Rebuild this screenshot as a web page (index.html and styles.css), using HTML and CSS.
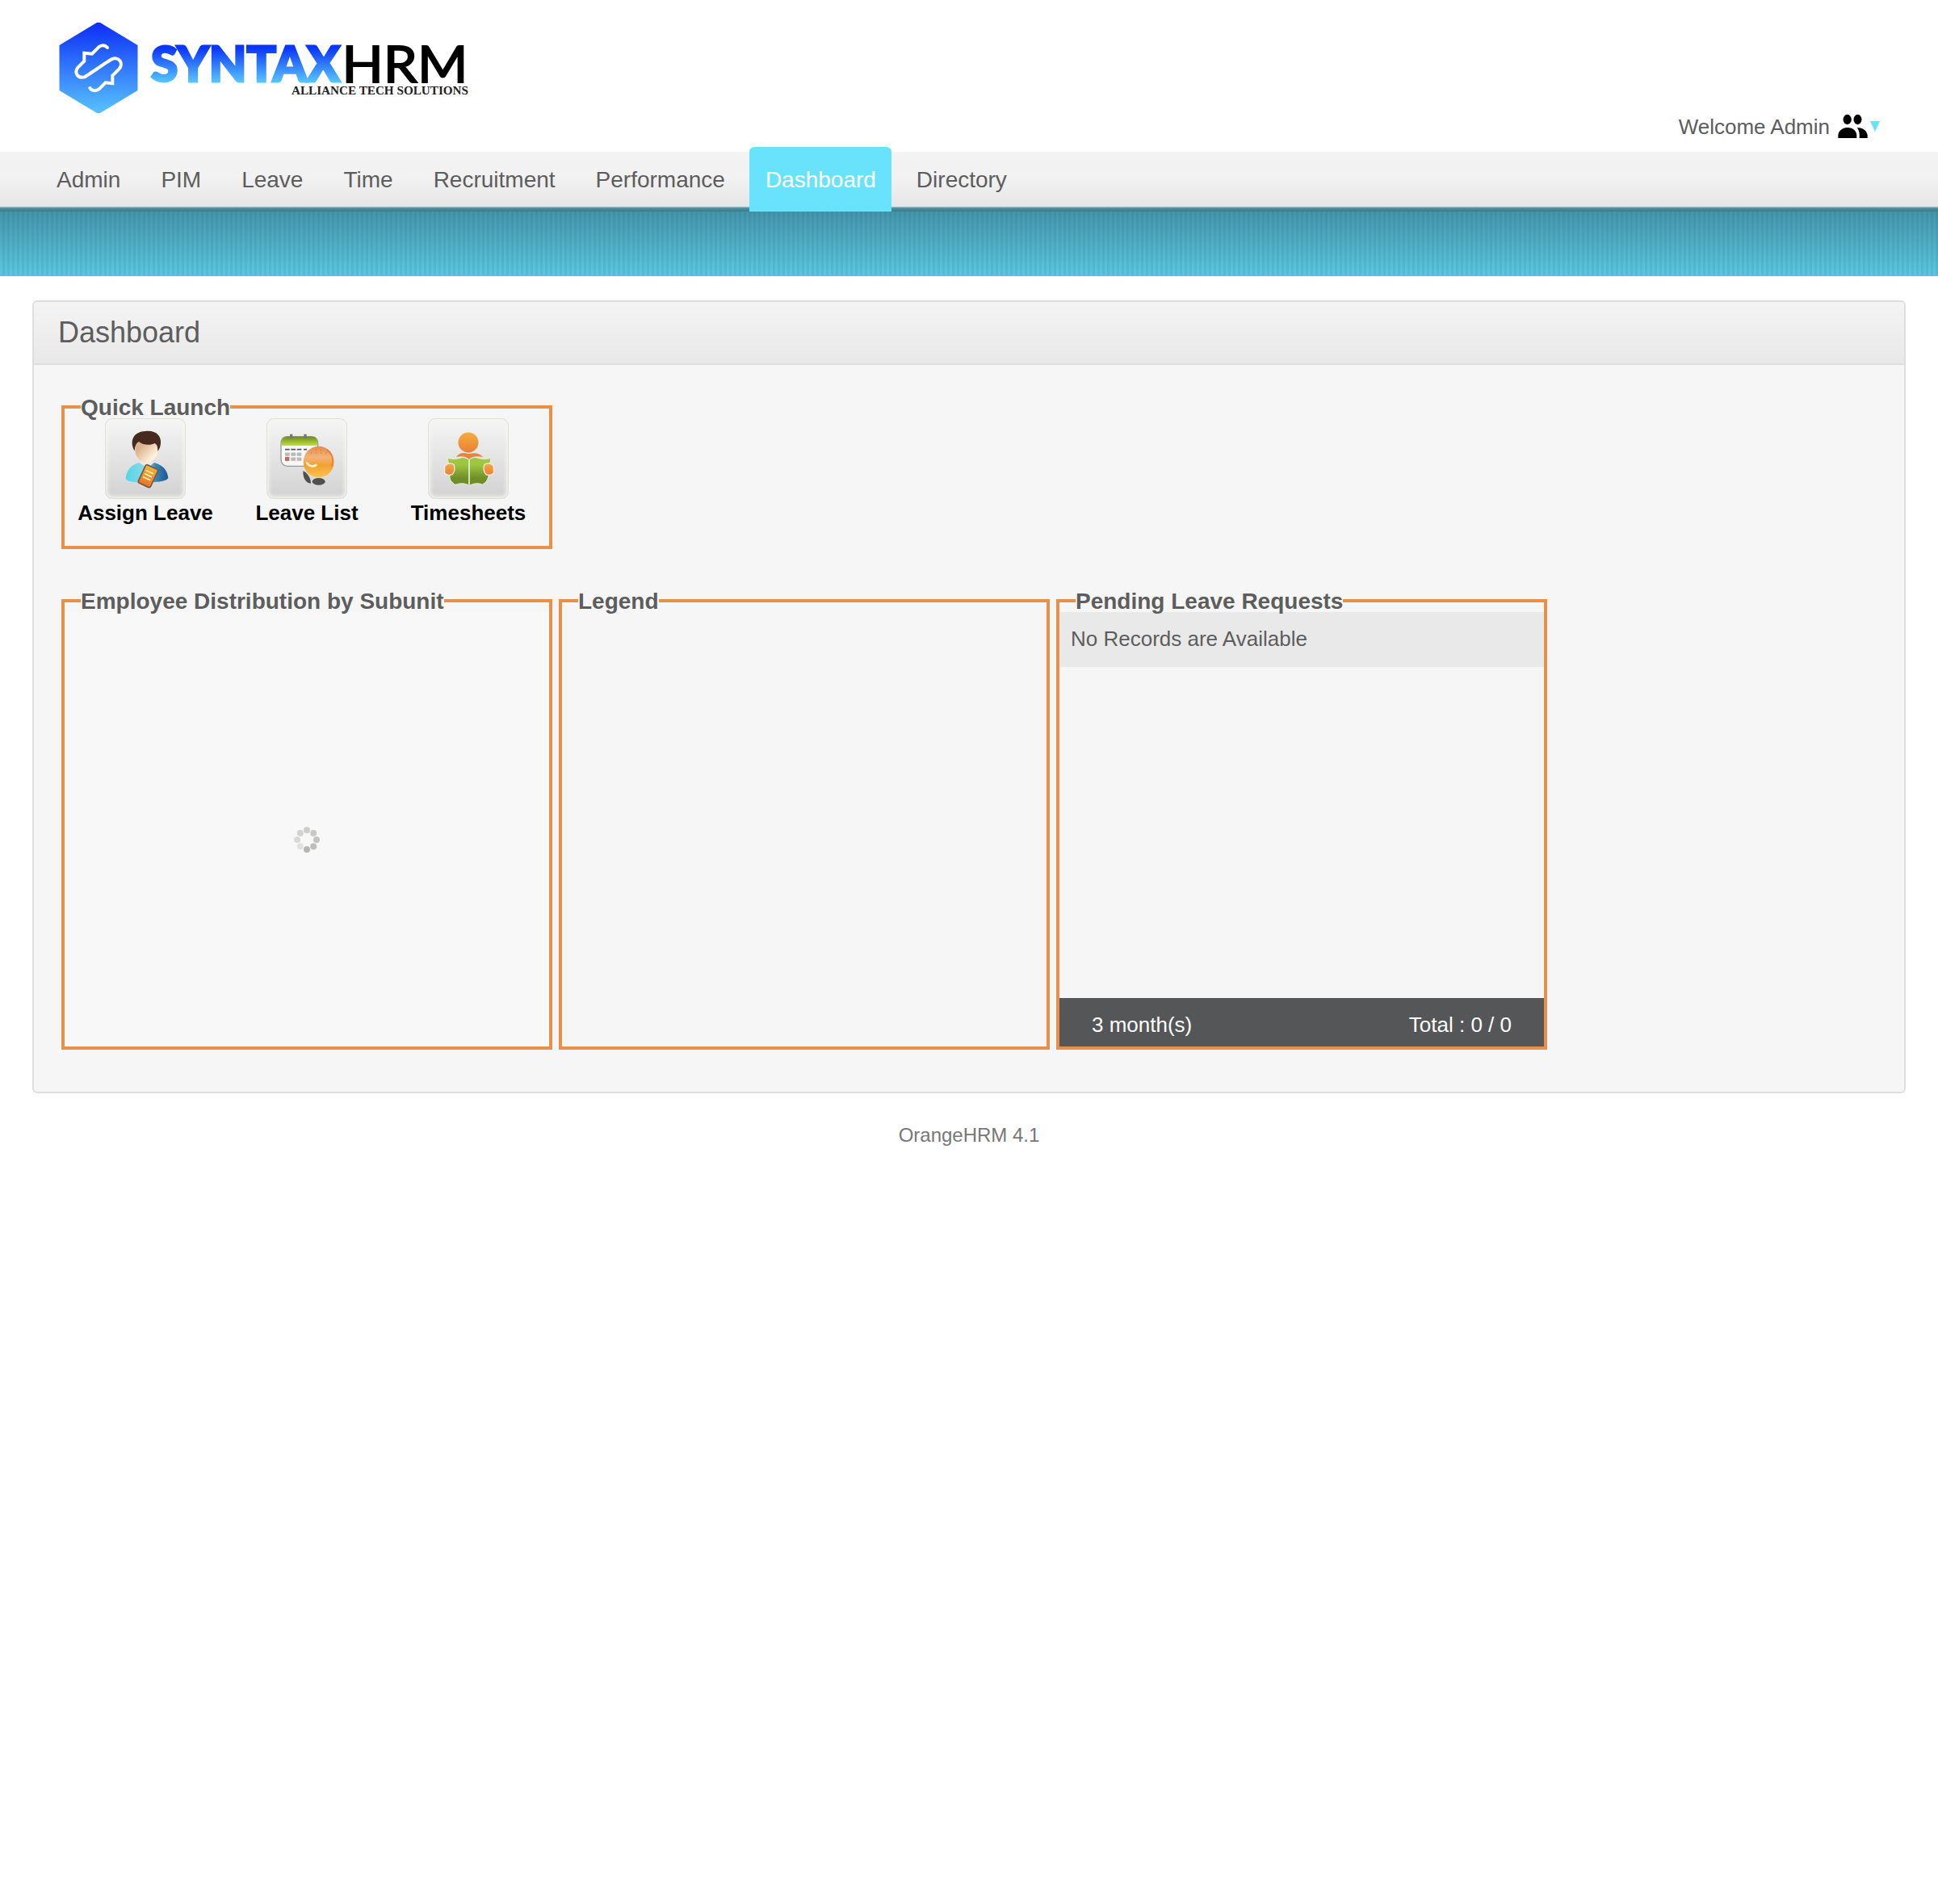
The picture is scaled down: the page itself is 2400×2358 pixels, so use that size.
FILE: index.html
```html
<!DOCTYPE html>
<html lang="en">
<head>
<meta charset="utf-8">
<title>Dashboard</title>
<link rel="stylesheet" href="styles.css">
</head>
<body>
<header class="header">
  <svg class="logo" viewBox="60 15 540 140" role="img" aria-label="Syntax HRM">
    <defs>
      <linearGradient id="hex" x1="0" y1="28" x2="0" y2="140" gradientUnits="userSpaceOnUse"><stop offset="0" stop-color="#0b2df6"/><stop offset="1" stop-color="#58c3ff"/></linearGradient>
      <linearGradient id="word" x1="0" y1="55" x2="0" y2="102" gradientUnits="userSpaceOnUse"><stop offset=".1" stop-color="#0b36f8"/><stop offset="1" stop-color="#58c6ff"/></linearGradient>
    </defs>
    <path fill="url(#hex)" d="M120 28h4l46.500 28v56L124 140h-4l-46.500-28V56z"/>
    <path transform="translate(60 15) scale(.33333)" fill="none" stroke="#fff" stroke-width="12" stroke-linecap="round" d="M219 132C210 122 199 122 189 128L162 155L133 152V182L110 205C93 226 110 247 134 241C144 237 220 182 235 175C262 163 281 191 262 212L238 236V265L212 262L188 286C175 295 160 292 154 282"/>
    <text class="logo-syntax" x="187" y="100.500" textLength="234" lengthAdjust="spacingAndGlyphs">SYNTAX</text>
    <text class="logo-hrm" x="423.500" y="101.500" textLength="156" lengthAdjust="spacingAndGlyphs">HRM</text>
    <text class="logo-tag" x="361" y="116.500" textLength="219" lengthAdjust="spacingAndGlyphs">ALLIANCE TECH SOLUTIONS</text>
  </svg>
  <div class="welcome">
    <span>Welcome Admin</span>
    <svg class="people" viewBox="648 63 156 93">
      <ellipse cx="683" cy="84" rx="15.500" ry="18.500"/><ellipse cx="721.500" cy="84" rx="15" ry="18.500"/>
      <path d="M649 153V141C652 121 672 114 683 114C698 114 716 121 718 141V153ZM719 115C744 112 757 130 758 142V153H728V139C728 129 724 120 719 115Z"/>
      <path class="caret" d="M768 90H804L786 130Z"/>
    </svg>
  </div>
</header>
<nav class="menu">
  <a>Admin</a><a>PIM</a><a>Leave</a><a>Time</a><a>Recruitment</a><a>Performance</a><a class="current">Dashboard</a><a>Directory</a>
</nav>
<div class="band"></div>
<main class="box">
  <h1 class="box-head">Dashboard</h1>
  <div class="box-body">
    <fieldset class="panel launch">
      <legend>Quick Launch</legend>
      <div class="launch-items">
        <a class="launch-item">
          <span class="tile"><svg viewBox="180 114 300 300">
            <defs>
              <linearGradient id="shirt"><stop offset="0" stop-color="#54d5e8"/><stop offset=".5" stop-color="#8ed9ea"/><stop offset=".7" stop-color="#3b86b8"/><stop offset="1" stop-color="#1c5590"/></linearGradient>
              <linearGradient id="face" x1="0" y1="0" x2="1" y2="1"><stop offset=".3" stop-color="#dbb28a"/><stop offset=".8" stop-color="#fff1df"/></linearGradient>
              <linearGradient id="card" x1="0" y1="0" x2="0" y2="1"><stop offset="0" stop-color="#f7b233"/><stop offset="1" stop-color="#ee7420"/></linearGradient>
            </defs>
            <path fill="url(#shirt)" d="M257 338C260 304 281 284 310 279H360C390 284 412 304 415 336C408 346 390 351 340 352C300 353 264 352 257 338Z"/>
            <path fill="#f3e7d8" d="M308 279L318 262H350L362 279L338 300Z"/>
            <ellipse fill="url(#face)" cx="334" cy="232" rx="42" ry="45"/>
            <path fill="#47291d" d="M290 235C272 205 280 164 330 162C370 158 390 180 387 207C386 222 380 232 376 236C376 218 373 211 364 207C352 215 323 215 306 201C299 205 291 214 290 235Z"/>
            <g transform="rotate(25 340 329)"><rect x="315" y="292" width="50" height="74" rx="7" fill="url(#card)" stroke="#6b5c50" stroke-width="5"/><path stroke="#fff3cc" stroke-width="5" d="M324 313h30M324 326h30M324 339h30"/></g>
          </svg></span>
          <span>Assign Leave</span>
        </a>
        <a class="launch-item">
          <span class="tile"><svg viewBox="780 114 300 300">
            <defs>
              <linearGradient id="cal" x1="0" y1="0" x2="0" y2="1"><stop offset="0" stop-color="#698d1c"/><stop offset="1" stop-color="#c3df3f"/></linearGradient>
              <linearGradient id="ball" x1="0" y1="0" x2="0" y2="1"><stop offset="0" stop-color="#e68a45"/><stop offset=".35" stop-color="#f3b47c"/><stop offset=".6" stop-color="#f2a132"/><stop offset="1" stop-color="#fbc34e"/></linearGradient>
            </defs>
            <path fill="#f8f8f8" stroke="#999" stroke-width="4" d="M834 210C834 190 842 182 856 182H948C963 182 971 192 971 210V292H858C842 290 834 280 834 266Z"/>
            <path fill="url(#cal)" d="M836 216V208C836 188 846 182 858 182H948C963 182 970 192 970 210V216Z"/>
            <path stroke="#777" stroke-width="10" d="M872 173v17M924 173v17"/>
            <path stroke="#555" stroke-width="5" d="M849 230h17M871 230h17M893 230h17M918 230h12"/>
            <path stroke="#b9b9b9" stroke-width="13" d="M849 248h17M871 248h17M893 248h17M871 266h17M893 266h17"/>
            <path stroke="#c4685a" stroke-width="15" d="M849 265h16"/>
            <path fill="#50504f" d="M916 310C930 315 945 335 945 356C929 357 915 340 916 310Z"/>
            <ellipse fill="#50504f" cx="974" cy="349" rx="24" ry="13"/>
            <ellipse fill="url(#ball)" cx="974" cy="276" rx="57" ry="58"/>
            <path fill="none" stroke="#df7931" stroke-width="6" opacity=".7" d="M1003 230Q1035 253 1023 294"/>
            <path fill="none" stroke="#fff1c9" stroke-width="8" stroke-linecap="round" d="M930 280Q944 299 964 288"/>
            <path stroke="#d66d36" stroke-width="4" stroke-dasharray="4 14" opacity=".7" d="M945 243h62M962 232h30"/>
          </svg></span>
          <span>Leave List</span>
        </a>
        <a class="launch-item">
          <span class="tile"><svg viewBox="420 114 300 300">
            <defs>
              <linearGradient id="reader" x1="0" y1="0" x2="0" y2="1"><stop offset="0" stop-color="#f4ad3b"/><stop offset="1" stop-color="#e97f38"/></linearGradient>
              <linearGradient id="book" x1="0" y1="0" x2="0" y2="1"><stop offset=".25" stop-color="#9fc640"/><stop offset=".75" stop-color="#6f8d28"/></linearGradient>
            </defs>
            <circle fill="url(#reader)" cx="570" cy="204" r="37.500"/>
            <path fill="#e98140" d="M525 258C535 244 550 239 571 247C593 239 612 245 625 258C600 253 584 256 573 266C560 255 545 253 525 258Z"/>
            <path fill="url(#book)" stroke="#e8f1d5" stroke-width="3" d="M493 262C512 267 530 266 545 260C556 258 567 264 572 269C580 262 590 258 600 260C617 266 636 267 654 262L650 282L645 330C639 348 633 354 622 360C604 353 588 357 574 364C558 355 540 354 522 361C509 354 500 342 501 330L496 282Z"/>
            <path stroke="#e8f1d5" stroke-width="5" d="M573 269v93"/>
            <path fill="url(#reader)" stroke="#eee" stroke-width="4" d="M482 292C490 280 508 279 516 286C522 298 519 315 510 323C500 327 487 325 482 318ZM664 292C656 280 638 279 630 286C624 298 627 315 636 323C646 327 659 325 664 318Z"/>
          </svg></span>
          <span>Timesheets</span>
        </a>
      </div>
    </fieldset>
    <div class="panels">
      <fieldset class="panel">
        <legend>Employee Distribution by Subunit</legend>
        <div class="loading">
          <svg class="spinner" viewBox="-16 -16 32 32">
            <circle cy="-12" r="4" fill="#cdcdc9"/><circle cx="8.200" cy="-8.200" r="4" fill="#c8c8c4"/><circle cx="12" r="4" fill="#c4c4c0"/><circle cx="8.200" cy="8.200" r="4" fill="#bebeba"/><circle cy="12" r="4" fill="#b5b5b1"/><circle cx="-8.200" cy="8.200" r="4" fill="#e2e2de"/><circle cx="-12" r="4" fill="#d8d8d5"/><circle cx="-8.200" cy="-8.200" r="4" fill="#d3d3cf"/>
          </svg>
        </div>
      </fieldset>
      <fieldset class="panel">
        <legend>Legend</legend>
      </fieldset>
      <fieldset class="panel">
        <legend>Pending Leave Requests</legend>
        <div class="requests">
          <div class="record">No Records are Available</div>
          <div class="totals"><span>3 month(s)</span><span>Total : 0 / 0</span></div>
        </div>
      </fieldset>
    </div>
  </div>
</main>
<footer class="footer">OrangeHRM 4.1</footer>
</body>
</html>
```
FILE: styles.css
```css
* { box-sizing: border-box; }
body {
  margin: 0;
  background: #fff;
  color: #5d5d5d;
  font: 26px/30px "Liberation Sans", Arial, sans-serif;
}
.header {
  height: 188px;
  padding: 15px 72px 0 60px;
  display: flex;
  justify-content: space-between;
  align-items: flex-start;
}
.logo { width: 540px; height: 140px; display: block; }
.logo-syntax { font: 900 61px Lato, sans-serif; fill: url(#word); stroke: url(#word); stroke-width: 3px; }
.logo-hrm { font: 400 62px Lato, sans-serif; fill: #000; stroke: #000; stroke-width: 1.8px; }
.logo-tag { font: 700 15px "Liberation Serif", serif; fill: #222; }
.welcome { display: flex; gap: 10px; margin-top: 126px; align-items: flex-start; }
.welcome span { line-height: 32px; }
.people { width: 52px; height: 31px; }
.caret { fill: #68e3fb; }
.menu {
  height: 74px;
  padding-left: 50px;
  display: flex;
  gap: 10px;
  background: linear-gradient(#f3f3f3, #f2f2f2 45%, #e6e6e6) 0 0 / 100% 68px no-repeat,
    linear-gradient(#a9c2c7, #4a8e9c 2px, #377c8b) 0 68px / 100% 6px no-repeat;
}
.menu a { padding: 0 20px; font-size: 28px; line-height: 70px; white-space: nowrap; }
.menu .current {
  height: 80px;
  margin: -6px 1px 0 0;
  padding-right: 19px;
  line-height: 82px;
  background: #68e3fb;
  border-radius: 6px 6px 0 0;
  color: #fff;
}
.band {
  height: 80px;
  background: repeating-linear-gradient(90deg, rgba(0, 0, 0, 0) 0 3px, rgba(0, 50, 70, .07) 3px 6px),
    linear-gradient(#4495aa, #5bc8df);
}
.box {
  margin: 30px 40px 0;
  border: 2px solid #dedede;
  border-radius: 6px;
  background: #f6f6f6;
  overflow: hidden;
}
.box-head {
  margin: 0;
  height: 78px;
  padding-left: 30px;
  border-bottom: 2px solid #dedede;
  background: linear-gradient(#f4f4f4, #e8e8e8);
  font-size: 36px;
  font-weight: 400;
  line-height: 75px;
}
.box-body { padding: 38px 34px 52px; display: flex; flex-direction: column; gap: 50px; }
.panel {
  width: 608px;
  height: 570px;
  min-width: 0;
  margin: 0;
  padding: 0;
  border: 4px solid #e8914b;
}
.panel legend {
  position: relative;
  height: 28px;
  margin-left: 20px;
  padding: 0;
  font-size: 28px;
  font-weight: 700;
  line-height: 30px;
}
.launch { height: 190px; }
.launch-items { display: grid; grid-template-columns: repeat(3, 200px); }
.launch-item {
  display: flex;
  flex-direction: column;
  align-items: center;
  gap: 2px;
  color: #000;
  font-weight: 700;
}
.tile {
  width: 100px;
  height: 100px;
  border: 1px solid #dededb;
  border-radius: 9px;
  background: linear-gradient(#f5f5f5, #d2d2d2);
  box-shadow: inset 0 0 4px 2px #f5f5f1;
}
.tile svg { display: block; width: 100px; height: 100px; margin: -1px; }
.panels { display: flex; gap: 8px; }
.loading {
  height: 538px;
  display: flex;
  justify-content: center;
  align-items: flex-start;
  background: #f8f8f8;
}
.spinner { width: 32px; height: 32px; margin-top: 266px; }
.requests { height: 538px; display: flex; flex-direction: column; justify-content: space-between; }
.record { height: 68px; padding: 18px 14px; background: #e9e9e9; }
.totals {
  height: 60px;
  padding: 0 40px;
  display: flex;
  justify-content: space-between;
  background: #555658;
  color: #fff;
  line-height: 66px;
}
.footer { margin-top: 37px; text-align: center; color: #777; font-size: 24px; }
```
